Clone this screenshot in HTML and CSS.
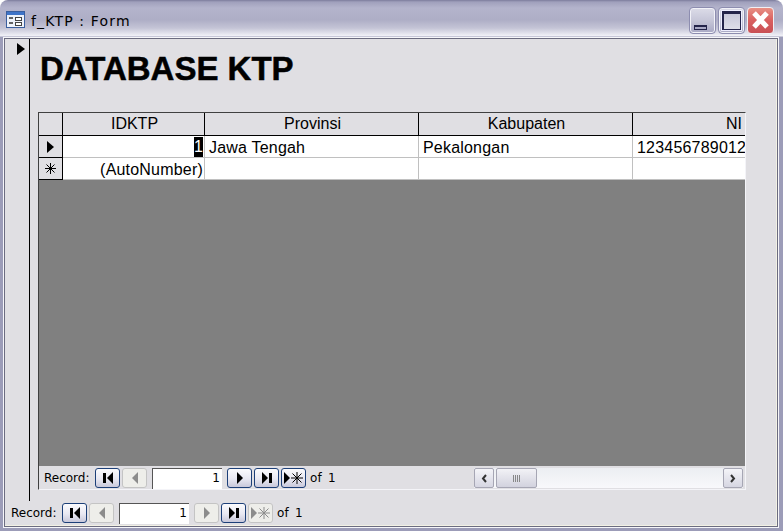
FILE: index.html
```html
<!DOCTYPE html>
<html lang="id">
<head>
<meta charset="utf-8">
<title>f_KTP : Form</title>
<link rel="stylesheet" href="styles.css">
</head>
<body>
<svg class="defs" width="0" height="0" aria-hidden="true">
  <symbol id="i-first" viewBox="0 0 16 12"><rect x="3" y="1" width="3" height="10"/><path d="M13 0v12L7 6z"/></symbol>
  <symbol id="i-prev" viewBox="0 0 16 12"><path d="M11 0v12L5 6z"/></symbol>
  <symbol id="i-next" viewBox="0 0 16 12"><path d="M5 0v12l6-6z"/></symbol>
  <symbol id="i-last" viewBox="0 0 16 12"><path d="M3 0v12l6-6z"/><rect x="10" y="1" width="3" height="10"/></symbol>
  <symbol id="i-new" viewBox="0 0 20 12"><path d="M0 0v12l6-6z"/><path d="M13 0v12M7 6h12M8.500 1.500l9 9M17.500 1.500l-9 9" fill="none" stroke="currentColor" stroke-width="1"/></symbol>
</svg>
<div class="window">
  <header class="titlebar">
    <svg class="form-icon" width="19" height="18" viewBox="0 0 19 18">
      <rect x=".5" y=".5" width="18" height="16" fill="#eef2fa" stroke="#3a5f9f"/>
      <rect x="1" y="1" width="17" height="3" fill="#3f74c8"/>
      <path d="M3 7h4M3 12h4" stroke="#333" stroke-width="1.500"/>
      <rect x="9.500" y="6.500" width="6" height="3" fill="#fff" stroke="#444"/>
      <rect x="9.500" y="11.500" width="6" height="3" fill="#fff" stroke="#444"/>
    </svg>
    <span class="title-text">f_KTP : Form</span>
    <div class="win-buttons">
      <button class="win-btn" aria-label="Minimize"><span class="glyph-min"></span></button>
      <button class="win-btn" aria-label="Maximize"><span class="glyph-max"></span></button>
      <button class="win-btn win-close" aria-label="Close">
        <svg width="25" height="25" viewBox="0 0 25 25"><path d="M6 5l13 14M19 5L6 19" stroke="#fff" stroke-width="5"/></svg>
      </button>
    </div>
  </header>
  <div class="client">
    <div class="form-area">
      <div class="selector">
        <svg class="sel-arrow" width="8" height="12" viewBox="0 0 8 12"><path d="M0 0v12l8-6z"/></svg>
      </div>
      <main class="detail">
        <h1 class="heading">DATABASE KTP</h1>
        <section class="subform">
          <div class="sheet">
            <div class="cell head corner"></div>
            <div class="cell head center">IDKTP</div>
            <div class="cell head center">Provinsi</div>
            <div class="cell head center">Kabupaten</div>
            <div class="cell head right last">NI</div>

            <div class="cell rowsel"><svg width="8" height="12" viewBox="0 0 8 12"><path d="M0 0v12l7-6z"/></svg></div>
            <div class="cell data right"><span class="selected">1</span></div>
            <div class="cell data">Jawa Tengah</div>
            <div class="cell data">Pekalongan</div>
            <div class="cell data last clip">123456789012</div>

            <div class="cell rowsel"><svg width="11" height="11" viewBox="0 0 11 11"><path d="M5.500 0v11M0 5.500h11M1.500 1.500l8 8M9.500 1.500l-8 8" fill="none" stroke="#000"/></svg></div>
            <div class="cell data right">(AutoNumber)</div>
            <div class="cell data"></div>
            <div class="cell data"></div>
            <div class="cell data last"></div>
          </div>
          <div class="empty"></div>
          <div class="subnav">
            <div class="nav">
              <span class="nav-label">Record:</span>
              <button class="nav-btn"><svg width="16" height="12"><use href="#i-first"/></svg></button>
              <button class="nav-btn off"><svg width="16" height="12"><use href="#i-prev"/></svg></button>
              <span class="nav-input">1</span>
              <button class="nav-btn"><svg width="16" height="12"><use href="#i-next"/></svg></button>
              <button class="nav-btn"><svg width="16" height="12"><use href="#i-last"/></svg></button>
              <button class="nav-btn"><svg width="20" height="12"><use href="#i-new"/></svg></button>
              <span class="nav-of">of 1</span>
            </div>
            <div class="hscroll">
              <button class="sb-btn"><svg width="8" height="9" viewBox="0 0 8 9"><path d="M6 1L3 4.500 6 8" fill="none" stroke="#333" stroke-width="2"/></svg></button>
              <button class="sb-thumb"><span class="grip"></span></button>
              <span class="sb-track"></span>
              <button class="sb-btn"><svg width="8" height="9" viewBox="0 0 8 9"><path d="M2 1l3 3.500L2 8" fill="none" stroke="#333" stroke-width="2"/></svg></button>
            </div>
          </div>
        </section>
      </main>
    </div>
    <footer class="mainnav">
      <div class="nav">
        <span class="nav-label">Record:</span>
        <button class="nav-btn"><svg width="16" height="12"><use href="#i-first"/></svg></button>
        <button class="nav-btn off"><svg width="16" height="12"><use href="#i-prev"/></svg></button>
        <span class="nav-input">1</span>
        <button class="nav-btn off"><svg width="16" height="12"><use href="#i-next"/></svg></button>
        <button class="nav-btn"><svg width="16" height="12"><use href="#i-last"/></svg></button>
        <button class="nav-btn off"><svg width="20" height="12"><use href="#i-new"/></svg></button>
        <span class="nav-of">of 1</span>
      </div>
    </footer>
  </div>
</div>
</body>
</html>
```

FILE: styles.css
```css
* { box-sizing: border-box; }
html, body { margin: 0; padding: 0; }
body { width: 783px; height: 531px; overflow: hidden; background: #fff; }
.defs { position: absolute; }
button { margin: 0; padding: 0; font: inherit; }

.window {
  width: 783px;
  height: 531px;
  display: flex;
  flex-direction: column;
  padding: 0 4px 3px 3px;
  border-radius: 8px 8px 0 0;
  background: linear-gradient(#7c7c9c 0, #a0a0bc 2px, #b4b4cc 8px, #aeaec6 20px, #c4c4d6 28px, #f2f2f8 36px, #9c9cb8 37px);
  font-family: "Liberation Sans", Arial, sans-serif;
}

.titlebar {
  height: 37px;
  flex: none;
  display: flex;
  align-items: center;
  padding: 0 5px 0 3px;
}
.form-icon { flex: none; margin-top: 3px; }
.title-text {
  margin: 5px 0 0 6px;
  font: 14px "DejaVu Sans", sans-serif;
  letter-spacing: 1.15px;
  color: #000;
}
.win-buttons { margin-left: auto; display: flex; gap: 2px; margin-top: 3px; }
.win-btn {
  width: 27px;
  height: 27px;
  position: relative;
  display: flex;
  align-items: center;
  justify-content: center;
  border: 1px solid #8d8db0;
  border-radius: 4px;
  box-shadow: inset 0 0 0 1px #f2f2f8;
  background: linear-gradient(#dcdce8, #c6c6d8 50%, #a8a8c4);
}
.glyph-min { position: absolute; left: 4px; bottom: 3px; width: 13px; height: 5px; border: 1px solid #24244a; border-top-width: 2px; background: #a9a9c5; }
.glyph-max { width: 19px; height: 19px; border: 1px solid #24244a; border-top-width: 3px; border-left-width: 2px; background: linear-gradient(#c8c8da, #dedee8); box-shadow: 0 0 0 1px #eef; }
.win-close {
  border-color: #f0f0f4;
  box-shadow: none;
  background: linear-gradient(#e89085, #d95f5f 50%, #c84f55);
}

.client {
  flex: 1;
  min-height: 0;
  display: flex;
  flex-direction: column;
  background: #e0dfe3;
  border: 1px solid #f6f6fa;
  padding: 1px 2px 2px 1px;
  box-shadow: inset 0 0 0 1px #6c6c80, inset -2px -2px 0 0 #f2f1e4;
}
.form-area { flex: 1; min-height: 0; display: flex; }
.selector {
  width: 25px;
  flex: none;
  border-right: 1px solid #000;
  padding: 4px 0 0 12px;
}
.sel-arrow { display: block; }
.detail { flex: 1; min-width: 0; padding: 0 0 0 8px; display: flex; flex-direction: column; }
.heading {
  margin: 11px 0 24px 2px;
  font-size: 33px;
  line-height: 38px;
  font-weight: 700;
  color: #000;
  white-space: nowrap;
  -webkit-text-stroke: .5px #000;
}

.subform {
  width: 708px;
  height: 378px;
  flex: none;
  display: flex;
  flex-direction: column;
  background: #808080;
  border-top: 1px solid #404040;
  border-left: 1px solid #404040;
  border-right: 1px solid #f4f4f8;
  border-bottom: 1px solid #f4f4f8;
}
.sheet {
  display: grid;
  grid-template-columns: 24px 142px 214px 214px 112px;
  grid-template-rows: 23px 22px 22px;
  font-size: 16px;
  color: #000;
}
.cell {
  background: #fff;
  border-right: 1px solid #c0c0c0;
  border-bottom: 1px solid #c0c0c0;
  padding: 0 1px 0 3px;
  line-height: 22px;
  white-space: nowrap;
  overflow: hidden;
}
.cell.data { padding-top: 1px; padding-left: 4px; letter-spacing: .2px; }
.cell.last { border-right: 0; }
.cell.clip { padding-right: 0; }
.head {
  background: #e0dfe3;
  border-right: 1px solid #000;
  border-bottom: 1px solid #000;
  line-height: 22px;
}
.head.last { border-right: 0; padding-right: 3px; }
.center { text-align: center; }
.right { text-align: right; }
.rowsel {
  background: #e0dfe3;
  border-right: 1px solid #000;
  border-bottom: 1px solid #000;
  display: flex;
  align-items: center;
  justify-content: center;
  padding: 0;
}
.selected { background: #000; color: #fff; display: inline-block; line-height: 20px; vertical-align: top; }
.empty { flex: 1; min-height: 0; }

.subnav {
  height: 23px;
  flex: none;
  display: flex;
  align-items: flex-start;
  background: #e0dfe3;
  padding-top: 2px;
}
.hscroll { width: 269px; height: 20px; display: flex; background: linear-gradient(#eceef2, #f8f8fb); }
.sb-btn {
  width: 20px;
  height: 20px;
  flex: none;
  display: flex;
  align-items: center;
  justify-content: center;
  border: 1px solid #a6a6b4;
  border-radius: 2px;
  background: linear-gradient(#f4f4f8, #d6d6e2);
}
.sb-thumb {
  width: 41px;
  height: 20px;
  flex: none;
  margin-left: 2px;
  display: flex;
  align-items: center;
  justify-content: center;
  border: 1px solid #a6a6b4;
  border-radius: 2px;
  background: linear-gradient(#f2f2f6, #d2d2de);
}
.grip { width: 7px; height: 7px; background: repeating-linear-gradient(90deg, #888 0 1px, transparent 1px 2px); }
.sb-track { flex: 1; }

.mainnav { height: 24px; flex: none; padding-top: 2px; }
.nav {
  display: flex;
  align-items: flex-start;
  height: 21px;
  font: 12px/20px "DejaVu Sans", sans-serif;
  color: #000;
}
.subnav .nav { padding-left: 5px; width: 435px; flex: none; }
.mainnav .nav { padding-left: 6px; }
.nav-label { width: 51px; flex: none; }
.nav-btn {
  width: 25px;
  height: 20px;
  flex: none;
  display: flex;
  align-items: center;
  justify-content: center;
  border: 1px solid #1c3f78;
  border-radius: 3px;
  background: linear-gradient(#fbfbfd, #e8e8f2 55%, #c8c8da);
  color: #000;
  fill: #000;
}
.nav-btn.off {
  border-color: #c4c4c4;
  background: #eeeeea;
  color: #8c8c8c;
  fill: #8c8c8c;
}
.nav-btn + .nav-btn { margin-left: 2px; }
.nav-input {
  width: 70px;
  height: 21px;
  flex: none;
  margin: 0 5px;
  background: #fff;
  border-top: 1px solid #555;
  border-left: 1px solid #555;
  text-align: right;
  padding-right: 2px;
  line-height: 19px;
}
.nav-of { margin-left: 4px; word-spacing: 2px; letter-spacing: .2px; }
```
